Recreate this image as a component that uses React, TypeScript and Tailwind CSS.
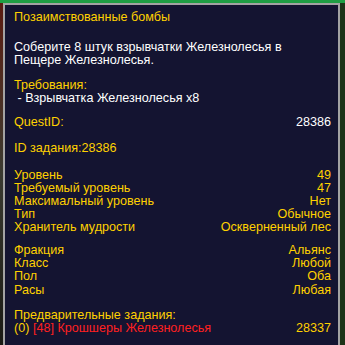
import React from "react";

const rows1 = [
  ["Уровень", "49"],
  ["Требуемый уровень", "47"],
  ["Максимальный уровень", "Нет"],
  ["Тип", "Обычное"],
  ["Хранитель мудрости", "Оскверненный лес"],
];

const rows2 = [
  ["Фракция", "Альянс"],
  ["Класс", "Любой"],
  ["Пол", "Оба"],
  ["Расы", "Любая"],
];

export default function App() {
  return (
    <div
      className="w-[345px] h-[345px] overflow-hidden flex flex-col bg-[#233a1c]"
      style={{ fontFamily: '"Liberation Sans", Arial, sans-serif' }}
    >
      <div className="h-[3px] bg-[#1f9e44] shrink-0" />
      <div className="flex flex-1">
        <div className="w-[3px] bg-gradient-to-b from-[#5a1a10] via-[#3a3a30] to-[#1a1a14]" />
        <div className="w-[337px] border-x-2 border-t-2 border-[#a3a3a3] bg-[#141431] pl-[9px] pr-[7px] pt-[6px] text-[12.6px] leading-[13px] text-[#ffd100]">
          <div>Позаимствованные бомбы</div>
          <div className="mt-[17px] text-white leading-[13px]">
            Соберите 8 штук взрывчатки Железнолесья в
            <br />
            Пещере Железнолесья.
          </div>
          <div className="mt-[12px]">Требования:</div>
          <div className="text-white">&nbsp;- Взрывчатка Железнолесья x8</div>
          <div className="mt-[11px] flex justify-between">
            <span>QuestID:</span>
            <span className="text-white">28386</span>
          </div>
          <div className="mt-[13px]">ID задания:28386</div>
          <div className="mt-[14px]">
            {rows1.map(([a, b]) => (
              <div key={a} className="flex justify-between">
                <span>{a}</span>
                <span>{b}</span>
              </div>
            ))}
          </div>
          <div className="mt-[10px]">
            {rows2.map(([a, b]) => (
              <div key={a} className="flex justify-between leading-[13.2px]">
                <span>{a}</span>
                <span>{b}</span>
              </div>
            ))}
          </div>
          <div className="mt-[12px]">Предварительные задания:</div>
          <div className="flex justify-between">
            <span>
              (0) <span className="text-[#ff2020]">[48] Крошшеры Железнолесья</span>
            </span>
            <span>28337</span>
          </div>
        </div>
        <div className="flex-1 bg-[#1d3318]" />
      </div>
    </div>
  );
}
